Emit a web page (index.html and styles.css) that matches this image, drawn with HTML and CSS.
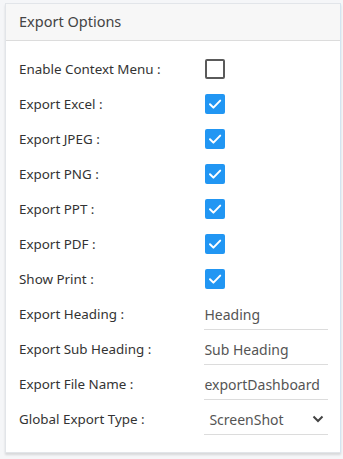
FILE: index.html
```html
<!DOCTYPE html>
<html>
  <head>
    <title>Export Options</title>
    <link rel="stylesheet" href="styles.css">
  </head>
  <body>
    <div class="panel">
      <div class="panel-header">Export Options</div>
      <form class="options">
        <div class="row">
          <label class="label">Enable Context Menu :</label>
          <span class="check"></span>
        </div>
        <div class="row">
          <label class="label">Export Excel :</label>
          <span class="check checked"><svg viewBox="0 0 20 20"><path d="M5 10.2l3.4 3.4L15.2 6.6"/></svg></span>
        </div>
        <div class="row">
          <label class="label">Export JPEG :</label>
          <span class="check checked"><svg viewBox="0 0 20 20"><path d="M5 10.2l3.4 3.4L15.2 6.6"/></svg></span>
        </div>
        <div class="row">
          <label class="label">Export PNG :</label>
          <span class="check checked"><svg viewBox="0 0 20 20"><path d="M5 10.2l3.4 3.4L15.2 6.6"/></svg></span>
        </div>
        <div class="row">
          <label class="label">Export PPT :</label>
          <span class="check checked"><svg viewBox="0 0 20 20"><path d="M5 10.2l3.4 3.4L15.2 6.6"/></svg></span>
        </div>
        <div class="row">
          <label class="label">Export PDF :</label>
          <span class="check checked"><svg viewBox="0 0 20 20"><path d="M5 10.2l3.4 3.4L15.2 6.6"/></svg></span>
        </div>
        <div class="row">
          <label class="label">Show Print :</label>
          <span class="check checked"><svg viewBox="0 0 20 20"><path d="M5 10.2l3.4 3.4L15.2 6.6"/></svg></span>
        </div>
        <div class="row">
          <label class="label">Export Heading :</label>
          <span class="field">Heading</span>
        </div>
        <div class="row">
          <label class="label">Export Sub Heading :</label>
          <span class="field">Sub Heading</span>
        </div>
        <div class="row">
          <label class="label">Export File Name :</label>
          <span class="field">exportDashboard</span>
        </div>
        <div class="row">
          <label class="label">Global Export Type :</label>
          <span class="field select">ScreenShot
            <svg class="chevron" viewBox="0 0 12 8"><path d="M1.5 1.5L6 6l4.5-4.5"/></svg>
          </span>
        </div>
      </form>
    </div>
  </body>
</html>
```
FILE: styles.css
```css
/* Page
------------------------------- */

body
{
  margin: 0;
  padding: 3px 2px 4px 5px;
  background-color: #f5f6f8;
  font-family: "Noto Sans", "Open Sans", sans-serif;
  color: #3a3a3a;
}

.panel
{
  background-color: #fff;
  border: 1px solid #e2e5e9;
  border-right-color: #d3e4f1;
  box-shadow: 0 2px 2px rgba(0, 0, 0, 0.12);
}

.panel-header
{
  height: 36px;
  line-height: 34px;
  padding-left: 13px;
  background-color: #f7f7f7;
  border-bottom: 1px solid #dcdcdc;
  font-size: 14.5px;
  color: #444;
}

/* rows
------------------------------- */

.options
{
  margin: 0;
  padding: 10px 12px 16px 13px;
}

.row
{
  display: flex;
  align-items: center;
  height: 35px;
}

.label
{
  width: 186px;
  padding-top: 1px;
  font-size: 13.4px;
  color: #333;
}

/* controls
------------------------------- */

.check
{
  box-sizing: border-box;
  width: 20px;
  height: 20px;
  border: 2px solid #5a5a5a;
  border-radius: 2px;
}

.check.checked
{
  border: none;
  background-color: #2196f3;
}

.check svg
{
  display: block;
  width: 20px;
  height: 20px;
  fill: none;
  stroke: #fff;
  stroke-width: 2;
  stroke-linecap: round;
  stroke-linejoin: round;
}

.field
{
  box-sizing: border-box;
  display: flex;
  align-items: center;
  width: 124px;
  height: 31px;
  margin-top: 2px;
  border-bottom: 1px solid #dcdcdc;
  font-size: 14px;
  color: #555;
  white-space: nowrap;
}

.select
{
  padding-left: 5px;
  justify-content: space-between;
}

.chevron
{
  width: 12px;
  height: 8px;
  margin-right: 4px;
  fill: none;
  stroke: #444;
  stroke-width: 2;
}
```
